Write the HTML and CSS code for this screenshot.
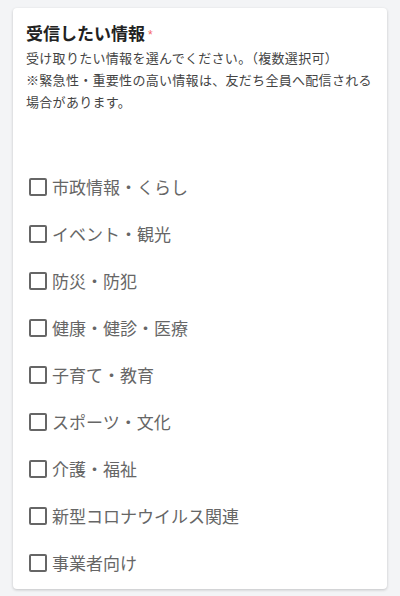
FILE: index.html
```html
<!DOCTYPE html>
<html lang="ja">
<head>
  <meta charset="UTF-8">
  <title>受信したい情報</title>
  <link rel="stylesheet" href="styles.css">
</head>
<body>

  <div class="card">
    <h2 class="card-title">受信したい情報<span class="required">*</span></h2>
    <p class="card-desc">受け取りたい情報を選んでください。（複数選択可）<br>※緊急性・重要性の高い情報は、友だち全員へ配信される<br>場合があります。</p>

    <ul class="options">
      <li><label><input type="checkbox"><span class="box"></span>市政情報・くらし</label></li>
      <li><label><input type="checkbox"><span class="box"></span>イベント・観光</label></li>
      <li><label><input type="checkbox"><span class="box"></span>防災・防犯</label></li>
      <li><label><input type="checkbox"><span class="box"></span>健康・健診・医療</label></li>
      <li><label><input type="checkbox"><span class="box"></span>子育て・教育</label></li>
      <li><label><input type="checkbox"><span class="box"></span>スポーツ・文化</label></li>
      <li><label><input type="checkbox"><span class="box"></span>介護・福祉</label></li>
      <li><label><input type="checkbox"><span class="box"></span>新型コロナウイルス関連</label></li>
      <li><label><input type="checkbox"><span class="box"></span>事業者向け</label></li>
    </ul>
  </div>

</body>
</html>
```

FILE: styles.css
```css
body {
  margin: 0;
  padding: 8px 13px;
  background-color: #f3f4f6;
  font-family: "Noto Sans CJK JP", "Noto Sans", sans-serif;
}

.card {
  background: #fff;
  border-radius: 4px;
  box-shadow: 0 1px 3px rgba(0, 0, 0, 0.2);
  padding: 13px 13px 3px;
}

.card-title {
  margin: 0;
  font-size: 17px;
  line-height: 24px;
  font-weight: bold;
  color: #222;
}

.required {
  color: #f56565;
  font-family: "Liberation Sans", sans-serif;
  font-size: 12px;
  font-weight: normal;
  margin-left: 3px;
  vertical-align: 1px;
}

.card-desc {
  margin: 0;
  font-size: 13px;
  letter-spacing: 0.3px;
  line-height: 22px;
  color: #444;
  white-space: nowrap;
}

.options {
  list-style: none;
  margin: 50px 0 0;
  padding: 0;
}

.options li {
  height: 47px;
  display: flex;
  align-items: center;
}

.options label {
  display: flex;
  align-items: center;
  font-size: 17px;
  color: #666;
  cursor: pointer;
}

.options input {
  display: none;
}

.box {
  width: 14px;
  height: 14px;
  border: 2px solid #666;
  border-radius: 2px;
  margin: 0 5px 0 3px;
}

.options input:checked + .box {
  background: #666;
}
```
